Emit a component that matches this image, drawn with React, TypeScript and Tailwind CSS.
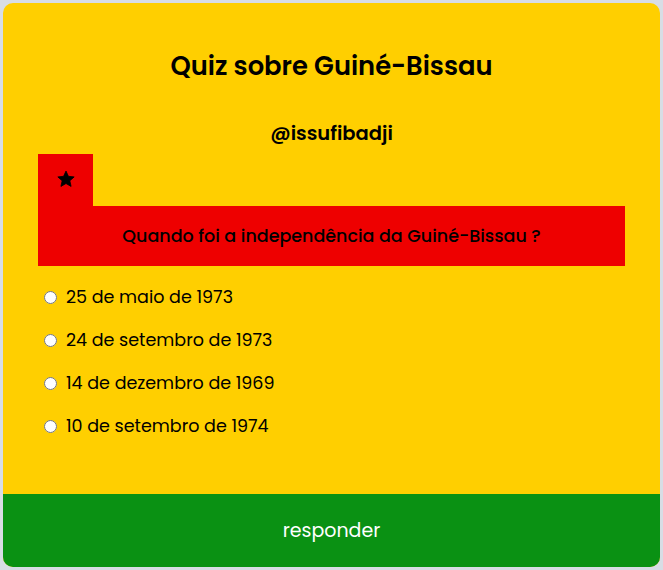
const options = [
  "25 de maio de 1973",
  "24 de setembro de 1973",
  "14 de dezembro de 1969",
  "10 de setembro de 1974",
];

export default function App() {
  return (
    <div
      className="min-h-[570px] w-full bg-[#d8dde5] p-[3px]"
      style={{ fontFamily: "Poppins, 'Open Sans', sans-serif" }}
    >
      <div className="flex h-[564px] flex-col overflow-hidden rounded-[10px] bg-[#ffcf00] text-black">
        <h1 className="mt-[45px] text-center text-[25.8px] font-semibold leading-[36px]">
          Quiz sobre Guiné-Bissau
        </h1>
        <h2 className="mt-[36px] text-center text-[19.5px] font-semibold leading-[27px]">
          @issufibadji
        </h2>

        <div className="mx-[35px] mt-[7px]">
          <div className="flex h-[52px] w-[55px] items-center justify-center bg-[#ee0000]">
            <svg width="20" height="20" viewBox="0 0 24 24" className="mt-[-2px]">
              <path
                d="M12 2.5l2.9 6.3 6.9.7-5.2 4.6 1.5 6.8L12 17.4l-6.1 3.5 1.5-6.8-5.2-4.6 6.9-.7z"
                fill="black"
                stroke="black"
                strokeWidth="1"
                strokeLinejoin="round"
              />
            </svg>
          </div>
          <div className="flex h-[60px] items-center justify-center bg-[#ee0000]">
            <p className="text-[17.5px] font-medium">Quando foi a independência da Guiné-Bissau ?</p>
          </div>
        </div>

        <div className="mt-[10px] flex flex-col pl-[41px]">
          {options.map((o) => (
            <label key={o} className="flex h-[43px] items-center gap-[9px] text-[17.5px]">
              <input type="radio" name="q" className="m-0 h-[13px] w-[13px]" />
              <span>{o}</span>
            </label>
          ))}
        </div>

        <button className="mt-auto h-[73px] w-full bg-[#0a9113] pt-[2px] text-[19px] text-white">
          responder
        </button>
      </div>
    </div>
  );
}
